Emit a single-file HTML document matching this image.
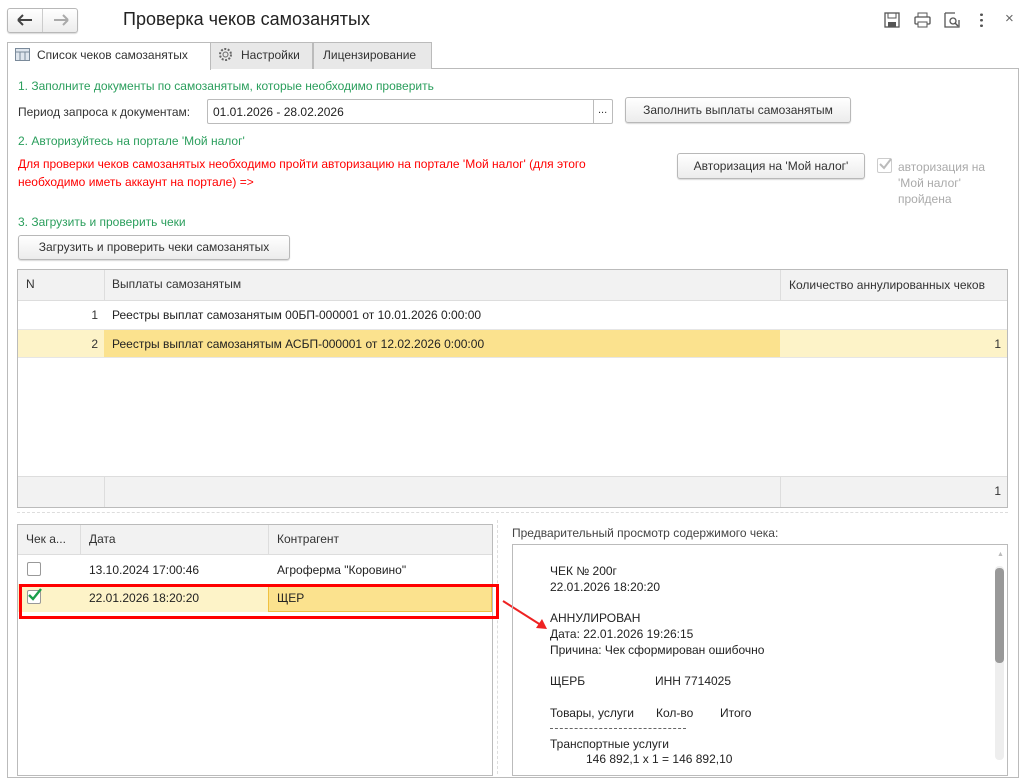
<!DOCTYPE html>
<html><head><meta charset="utf-8"><style>
*{box-sizing:border-box;margin:0;padding:0}
body{width:1024px;height:774px;overflow:hidden;background:#fff;font-family:"Liberation Sans",Arial,sans-serif;font-size:12px;color:#333;position:relative}
.a{position:absolute;white-space:nowrap}
.btn{position:absolute;border:1px solid #b8b8b8;border-radius:3px;background:linear-gradient(#fff,#ececec);box-shadow:0 1px 1px rgba(0,0,0,.15);text-align:center;color:#333}
.g{color:#2a9e5c}
.r{color:#f00}
.cell{position:absolute;white-space:nowrap;line-height:28px;padding:0 6px}
</style></head><body>
<div class="btn" style="left:7px;top:8px;width:71px;height:25px"></div>
<div class="a" style="left:42px;top:9px;height:23px;border-left:1px solid #ccc"></div>
<svg class="a" style="left:16px;top:14px" width="18" height="12"><path d="M2 6H16M2 6L7 1M2 6L7 11" stroke="#444" stroke-width="2" fill="none"/></svg>
<svg class="a" style="left:52px;top:14px" width="18" height="12"><path d="M2 6H16M16 6L11 1M16 6L11 11" stroke="#aaa" stroke-width="2" fill="none"/></svg>
<div class="a" style="left:123px;top:9px;font-size:18px;color:#222">Проверка чеков самозанятых</div>
<svg class="a" style="left:884px;top:12px" width="16" height="16"><rect x="1" y="1" width="14" height="14" fill="none" stroke="#555" stroke-width="1.3"/><rect x="4" y="1" width="8" height="5" fill="none" stroke="#555"/><rect x="4" y="10" width="8" height="5" fill="#555"/></svg>
<svg class="a" style="left:914px;top:12px" width="17" height="16"><rect x="4" y="1" width="9" height="4" fill="none" stroke="#555"/><rect x="1" y="5" width="15" height="7" rx="1" fill="none" stroke="#555" stroke-width="1.3"/><rect x="4" y="10" width="9" height="5" fill="#fff" stroke="#555"/></svg>
<svg class="a" style="left:944px;top:12px" width="16" height="16"><path d="M1 1H11M1 1V15H15V8" fill="none" stroke="#555" stroke-width="1.3"/><circle cx="9" cy="9" r="3" fill="none" stroke="#555" stroke-width="1.3"/><path d="M11 11L14 14" stroke="#555" stroke-width="1.5"/></svg>
<div class="a" style="left:980px;top:12px;width:3px;height:16px;background:radial-gradient(circle,#555 1.3px,transparent 1.5px) 0 0/3px 5.5px"></div>
<div class="a" style="left:1005px;top:10px;font-size:15px;color:#666">×</div>
<div class="a" style="left:7px;top:68px;width:1012px;height:710px;border:1px solid #bbb"></div>
<div class="a" style="left:210px;top:42px;width:103px;height:27px;background:#e8e8e8;border:1px solid #bbb;border-bottom:none"></div>
<div class="a" style="left:313px;top:42px;width:119px;height:27px;background:#e8e8e8;border:1px solid #bbb;border-bottom:none"></div>
<div class="a" style="left:7px;top:42px;width:204px;height:28px;background:#fff;border:1px solid #bbb;border-bottom:none"></div>
<svg class="a" style="left:15px;top:48px" width="15" height="13"><rect x="0.5" y="0.5" width="14" height="12" fill="#dfe6ee" stroke="#7a8a9a"/><path d="M0.5 4H14.5M5 4V12.5M10 4V12.5" stroke="#7a8a9a"/></svg>
<div class="a" style="left:37px;top:48px">Список чеков самозанятых</div>
<svg class="a" style="left:218px;top:47px" width="15" height="15"><circle cx="7.5" cy="7.5" r="2.5" fill="none" stroke="#666"/><circle cx="7.5" cy="7.5" r="5.5" fill="none" stroke="#666" stroke-width="2" stroke-dasharray="2 1.5"/></svg>
<div class="a" style="left:241px;top:48px">Настройки</div>
<div class="a" style="left:323px;top:48px">Лицензирование</div>
<div class="a g" style="left:18px;top:79px">1. Заполните документы по самозанятым, которые необходимо проверить</div>
<div class="a" style="left:18px;top:105px">Период запроса к документам:</div>
<div class="a" style="left:207px;top:99px;width:406px;height:25px;border:1px solid #bbb;border-radius:2px"></div>
<div class="a" style="left:593px;top:99px;height:25px;border-left:1px solid #bbb"></div>
<div class="a" style="left:213px;top:105px;color:#222">01.01.2026 - 28.02.2026</div>
<div class="a" style="left:598px;top:104px;font-size:11px">...</div>
<div class="btn" style="left:625px;top:97px;width:226px;height:26px;line-height:24px">Заполнить выплаты самозанятым</div>
<div class="a g" style="left:18px;top:134px">2. Авторизуйтесь на портале 'Мой налог'</div>
<div class="a r" style="left:18px;top:157px">Для проверки чеков самозанятых необходимо пройти авторизацию на портале 'Мой налог' (для этого</div>
<div class="a r" style="left:18px;top:175px">необходимо иметь аккаунт на портале) =&gt;</div>
<div class="btn" style="left:677px;top:153px;width:188px;height:26px;line-height:24px">Авторизация на 'Мой налог'</div>
<div class="a" style="left:877px;top:158px;width:15px;height:15px;border:1px solid #ccc;border-radius:2px"></div>
<svg class="a" style="left:878px;top:157px" width="14" height="14"><path d="M2 7L6 11L13 2" stroke="#bbb" stroke-width="2" fill="none"/></svg>
<div class="a" style="left:898px;top:159px;color:#aaa;line-height:16px">авторизация на<br>'Мой налог'<br>пройдена</div>
<div class="a g" style="left:18px;top:215px">3. Загрузить и проверить чеки</div>
<div class="btn" style="left:18px;top:235px;width:272px;height:25px;line-height:23px">Загрузить и проверить чеки самозанятых</div>
<div class="a" style="left:17px;top:269px;width:991px;height:239px;border:1px solid #bbb"></div>
<div class="a" style="left:18px;top:270px;width:989px;height:31px;background:#f2f2f2;border-bottom:1px solid #ddd"></div>
<div class="a" style="left:18px;top:476px;width:989px;height:31px;background:#f2f2f2;border-top:1px solid #ddd"></div>
<div class="a" style="left:18px;top:330px;width:86px;height:27px;background:#fdf3c8"></div>
<div class="a" style="left:104px;top:330px;width:676px;height:27px;background:#fbe28e"></div>
<div class="a" style="left:780px;top:330px;width:227px;height:27px;background:#fdf3c8"></div>
<div class="a" style="left:18px;top:329px;width:989px;border-top:1px solid #e6e6e6"></div>
<div class="a" style="left:18px;top:357px;width:989px;border-top:1px solid #e6e6e6"></div>
<div class="a" style="left:104px;top:270px;height:31px;border-left:1px solid #ddd"></div>
<div class="a" style="left:780px;top:270px;height:31px;border-left:1px solid #ddd"></div>
<div class="a" style="left:104px;top:476px;height:31px;border-left:1px solid #ddd"></div>
<div class="a" style="left:780px;top:476px;height:31px;border-left:1px solid #ddd"></div>
<div class="cell" style="left:20px;top:270px">N</div>
<div class="cell" style="left:106px;top:270px">Выплаты самозанятым</div>
<div class="cell" style="left:783px;top:271px">Количество аннулированных чеков</div>
<div class="cell" style="left:18px;top:301px;width:86px;text-align:right">1</div>
<div class="cell" style="left:106px;top:301px;color:#222">Реестры выплат самозанятым 00БП-000001 от 10.01.2026 0:00:00</div>
<div class="cell" style="left:18px;top:330px;width:86px;text-align:right">2</div>
<div class="cell" style="left:106px;top:330px;color:#222">Реестры выплат самозанятым АСБП-000001 от 12.02.2026 0:00:00</div>
<div class="cell" style="left:780px;top:330px;width:227px;text-align:right">1</div>
<div class="cell" style="left:780px;top:477px;width:227px;text-align:right">1</div>
<div class="a" style="left:17px;top:512px;width:991px;border-top:1px dashed #ddd"></div>
<div class="a" style="left:497px;top:520px;height:254px;border-left:1px dashed #ddd"></div>
<div class="a" style="left:17px;top:524px;width:476px;height:252px;border:1px solid #bbb"></div>
<div class="a" style="left:18px;top:525px;width:474px;height:30px;background:#f2f2f2;border-bottom:1px solid #ddd"></div>
<div class="a" style="left:80px;top:525px;height:30px;border-left:1px solid #ddd"></div>
<div class="a" style="left:268px;top:525px;height:30px;border-left:1px solid #ddd"></div>
<div class="cell" style="left:20px;top:525px">Чек а...</div>
<div class="cell" style="left:83px;top:525px">Дата</div>
<div class="cell" style="left:271px;top:525px">Контрагент</div>
<div class="a" style="left:27px;top:562px;width:14px;height:14px;border:1px solid #999;border-radius:2px;background:#fff"></div>
<div class="cell" style="left:83px;top:556px;color:#222">13.10.2024 17:00:46</div>
<div class="cell" style="left:271px;top:556px;color:#222">Агроферма "Коровино"</div>
<div class="a" style="left:18px;top:584px;width:250px;height:28px;background:#fdf3c8"></div>
<div class="a" style="left:268px;top:584px;width:224px;height:28px;background:#fbe28e;border:1px solid #f0c040"></div>
<div class="a" style="left:27px;top:590px;width:14px;height:14px;border:1px solid #999;border-radius:2px;background:#fff"></div>
<svg class="a" style="left:27px;top:587px" width="16" height="15"><path d="M2 8L6 12L14 2" stroke="#1a9e4a" stroke-width="2.4" fill="none"/></svg>
<div class="cell" style="left:83px;top:584px;color:#222">22.01.2026 18:20:20</div>
<div class="cell" style="left:271px;top:584px;color:#222">ЩЕР</div>
<div class="a" style="left:19px;top:584px;width:480px;height:35px;border:3px solid #f00"></div>
<svg class="a" style="left:500px;top:598px" width="50" height="34"><path d="M3 3L44 29" stroke="#e22" stroke-width="2"/><path d="M47 31L36 30L42 21Z" fill="#e22"/></svg>
<div class="a" style="left:512px;top:526px;color:#444">Предварительный просмотр содержимого чека:</div>
<div class="a" style="left:512px;top:544px;width:496px;height:232px;border:1px solid #bbb"></div>
<div class="a" style="left:995px;top:566px;width:9px;height:194px;background:#eee;border-radius:4px"></div>
<div class="a" style="left:995px;top:568px;width:9px;height:95px;background:#999;border-radius:4px"></div>
<div class="a" style="left:997px;top:551px;font-size:7px;color:#bbb">▲</div>
<div class="a" style="left:550px;top:563px;line-height:16px;color:#222">ЧЕК № 200г<br>22.01.2026 18:20:20</div>
<div class="a" style="left:550px;top:610px;line-height:16px;color:#222">АННУЛИРОВАН<br>Дата: 22.01.2026 19:26:15<br>Причина: Чек сформирован ошибочно</div>
<div class="a" style="left:550px;top:674px;color:#222">ЩЕРБ</div>
<div class="a" style="left:655px;top:674px;color:#222">ИНН 7714025</div>
<div class="a" style="left:550px;top:706px;color:#222">Товары, услуги</div>
<div class="a" style="left:656px;top:706px;color:#222">Кол-во</div>
<div class="a" style="left:720px;top:706px;color:#222">Итого</div>
<div class="a" style="left:550px;top:728px;width:136px;border-top:1px dashed #666"></div>
<div class="a" style="left:550px;top:737px;color:#222">Транспортные услуги</div>
<div class="a" style="left:586px;top:752px;color:#222">146 892,1 x 1 = 146 892,10</div>
</body></html>
